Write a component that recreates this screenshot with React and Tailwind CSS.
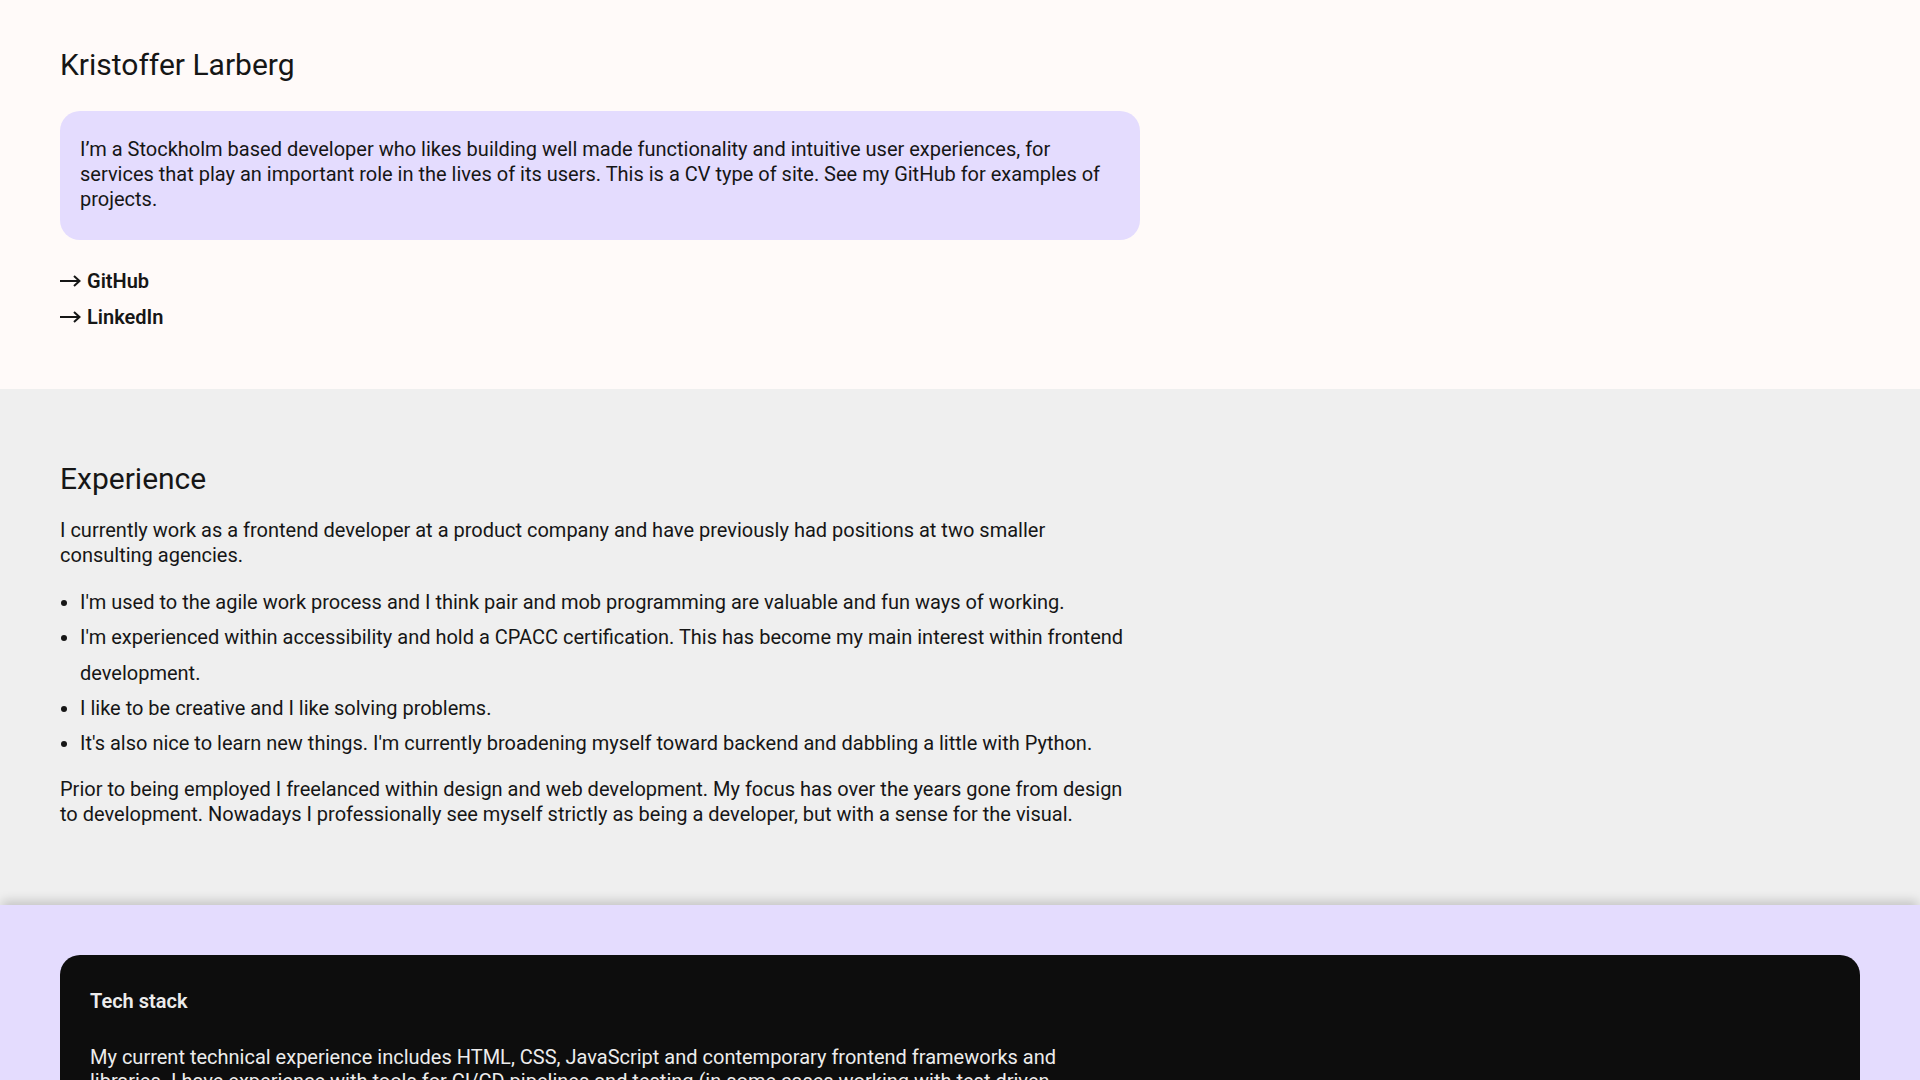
import React from 'react';

/**
 * Arrow used in front of the profile links
 */
const LinkArrow = () => (
  <svg width="21" height="12" viewBox="0 0 21 12" fill="none" aria-hidden="true" className="shrink-0">
    <path d="M0 6h19.5M14 1l5.5 5-5.5 5" stroke="currentColor" strokeWidth="2" />
  </svg>
);

const links = [
  { label: 'GitHub', href: '#github' },
  { label: 'LinkedIn', href: '#linkedin' },
];

const experiencePoints = [
  "I'm used to the agile work process and I think pair and mob programming are valuable and fun ways of working.",
  "I'm experienced within accessibility and hold a CPACC certification. This has become my main interest within frontend development.",
  'I like to be creative and I like solving problems.',
  "It's also nice to learn new things. I'm currently broadening myself toward backend and dabbling a little with Python.",
];

const App = () => {
  return (
    <div className="h-screen overflow-y-scroll text-[#161616] font-['Roboto','Liberation_Sans',sans-serif]">
      {/* Intro */}
      <header className="bg-[#fffaf9] px-[60px] pt-[47px] pb-[54px]">
        <h1 className="text-[30px] leading-[36px] font-normal">Kristoffer Larberg</h1>
        <div className="mt-[28px] w-[1080px] rounded-[20px] bg-[#e4dcfe] px-5 pt-[26px] pb-[28px]">
          <p className="text-[20px] leading-[25px]">
            I’m a Stockholm based developer who likes building well made functionality and intuitive user
            experiences, for services that play an important role in the lives of its users. This is a CV type of
            site. See my GitHub for examples of projects.
          </p>
        </div>
        <ul className="mt-[23px]">
          {links.map((link) => (
            <li key={link.label}>
              <a href={link.href} className="flex items-center gap-[6px] text-[20px] leading-[36px] font-semibold">
                <LinkArrow />
                {link.label}
              </a>
            </li>
          ))}
        </ul>
      </header>

      {/* Experience */}
      <section className="bg-[#efefef] px-[60px] pt-[72px] pb-[78px]">
        <h2 className="text-[30px] leading-[36px] font-normal">Experience</h2>
        <div className="max-w-[1080px] text-[20px] leading-[25px]">
          <p className="mt-[21px]">
            I currently work as a frontend developer at a product company and have previously had positions at two
            smaller consulting agencies.
          </p>
          <ul className="mt-[17px] list-disc pl-5 leading-[35.3px]">
            {experiencePoints.map((point) => (
              <li key={point}>{point}</li>
            ))}
          </ul>
          <p className="mt-4">
            Prior to being employed I freelanced within design and web development. My focus has over the years gone
            from design to development. Nowadays I professionally see myself strictly as being a developer, but with a
            sense for the visual.
          </p>
        </div>
      </section>

      {/* Tech stack */}
      <section className="relative bg-[#e4dcfe] px-[60px] pt-[50px] pb-[60px] shadow-[0_-6px_10px_-2px_rgba(0,0,0,0.18)]">
        <div className="w-[1800px] rounded-[20px] bg-[#0d0d0d] px-[30px] pt-[34px] pb-[40px] text-[#ececec]">
          <h2 className="text-[20px] leading-[24px] font-semibold">Tech stack</h2>
          <p className="mt-[32px] max-w-[1010px] text-[20px] leading-[24px]">
            My current technical experience includes HTML, CSS, JavaScript and contemporary frontend frameworks and
            libraries. I have experience with tools for CI/CD pipelines and testing (in some cases working with test
            driven development) and I have worked with headless CMS solutions and REST APIs.
          </p>
        </div>
      </section>
    </div>
  );
};

export default App;
